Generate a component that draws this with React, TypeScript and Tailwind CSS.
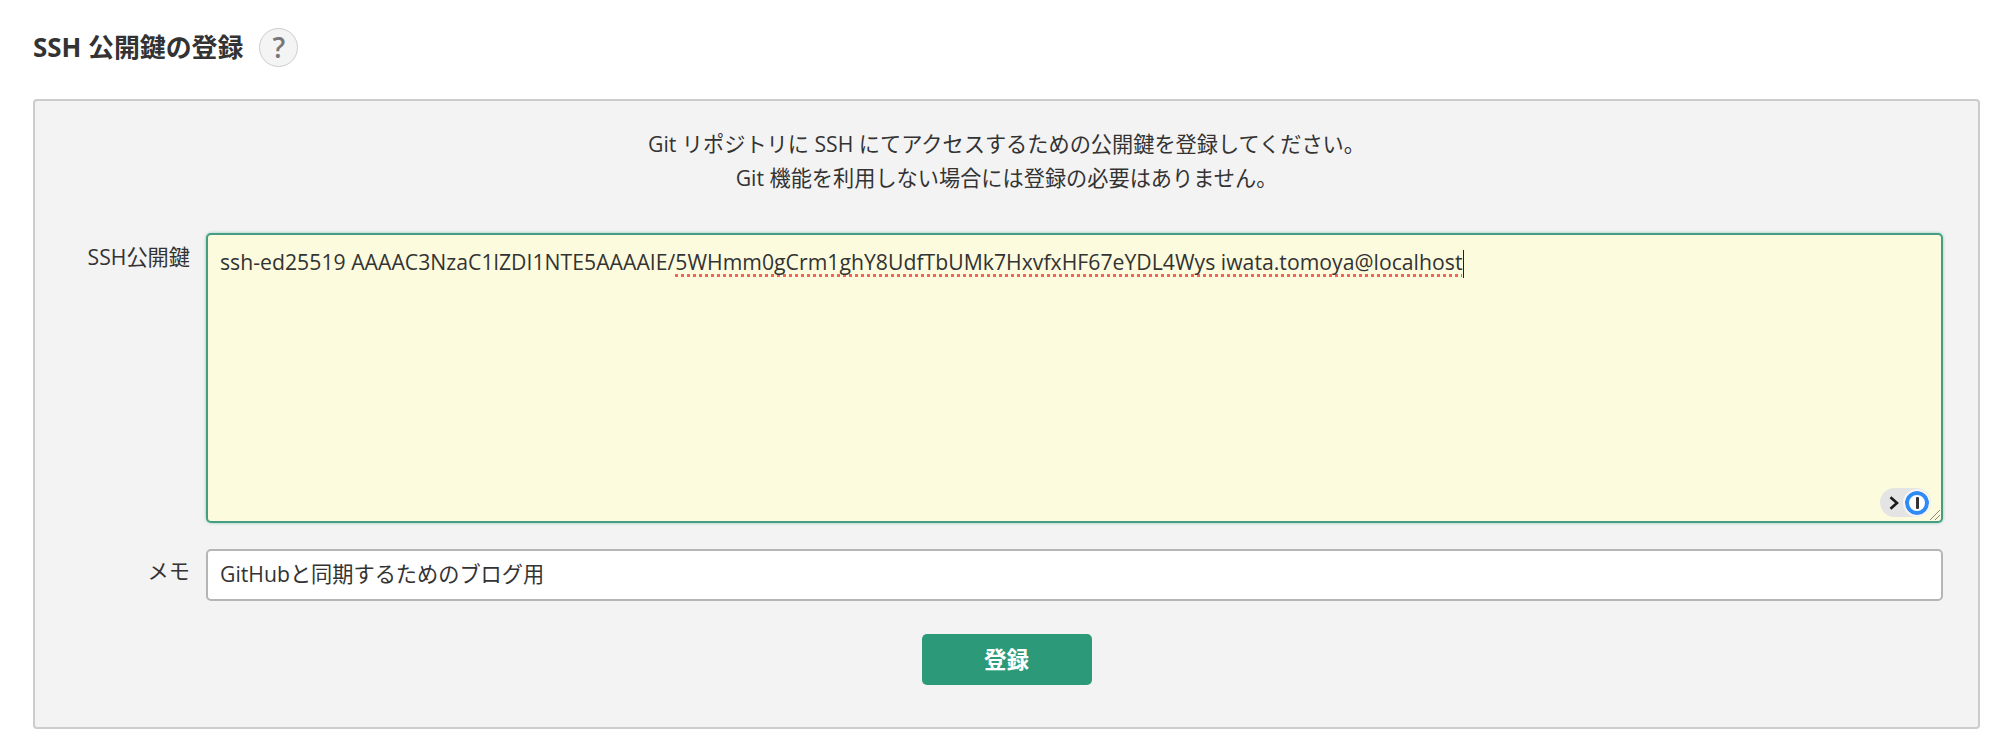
export default function App() {
  return (
    <div className="min-h-[739px] bg-white pl-[33px] pr-5 pt-[27px] text-[#333] [font-family:'Open_Sans','Noto_Sans_CJK_JP',sans-serif]">
      <div className="flex h-[40px] items-center">
        <h2 className="text-[25.9px] font-bold leading-[40px] text-[#333]">SSH 公開鍵の登録</h2>
        <span className="ml-[16px] flex h-[39px] w-[39px] items-center justify-center rounded-full border border-[#ccc] bg-[#f4f4f4] text-[28px] font-semibold leading-none text-[#777]">?</span>
      </div>
      <div className="mt-[32px] h-[630px] rounded-[4px] border-2 border-[#ccc] bg-[#f3f3f3] pt-[26px]">
        <p className="text-center text-[21.2px] leading-[34px]">
          Git リポジトリに SSH にてアクセスするための公開鍵を登録してください。
          <br />
          Git 機能を利用しない場合には登録の必要はありません。
        </p>
        <div className="mt-[38px] flex pr-[35px]">
          <label className="w-[171px] shrink-0 pr-[16px] pt-[8px] text-right text-[21.2px] leading-[32px]">SSH公開鍵</label>
          <div className="relative h-[290px] flex-1 rounded-[5px] border-2 border-[#459e84] bg-[#fcfbdd] shadow-[0_0_3px_rgba(42,155,120,0.5)]">
            <div className="whitespace-nowrap pl-[12px] pt-[11px] text-[21.2px] leading-[32px] tracking-[0.02px]">
              <span>ssh-ed25519 AAAAC3NzaC1lZDI1NTE5AAAAIE/</span>
              <span className="underline decoration-[#f0645a] decoration-dotted decoration-[3px] underline-offset-[4px] [text-decoration-skip-ink:none]">5WHmm0gCrm1ghY8UdfTbUMk7HxvfxHF67eYDL4Wys iwata.tomoya@localhost</span>
              <span className="ml-px inline-block h-[28px] w-px bg-[#222] align-middle" />
            </div>
            <div className="absolute bottom-[4px] right-[10px] flex h-[29px] w-[51px] items-center rounded-full bg-[#e4e4e4]">
              <svg viewBox="0 0 10 14" className="ml-[9px] h-[14px] w-[10px]">
                <path d="M1.5 1.2L8 7l-6.5 5.8" fill="none" stroke="#1a1a1a" strokeWidth="2.6" />
              </svg>
              <span className="ml-[6px] flex h-[24px] w-[24px] items-center justify-center rounded-full border-[4px] border-[#2f8cf5] bg-white outline-2 outline-[#f4f4f4]">
                <span className="h-[12px] w-[3px] rounded-[1px] bg-[#333]" />
              </span>
            </div>
            <svg viewBox="0 0 12 12" className="absolute bottom-0 right-0 h-[12px] w-[12px]">
              <path d="M1 11L11 1M6 11l5-5" stroke="#888" strokeWidth="1" fill="none" />
            </svg>
          </div>
        </div>
        <div className="mt-[26px] flex pr-[35px]">
          <label className="w-[171px] shrink-0 pr-[16px] pt-[6px] text-right text-[21.2px] leading-[32px]">メモ</label>
          <div className="flex h-[52px] flex-1 items-center rounded-[5px] border-2 border-[#b5b5b5] bg-white pb-[3px] pl-[12px] text-[21.2px]">GitHubと同期するためのブログ用</div>
        </div>
        <div className="mt-[33px] flex justify-center">
          <button className="h-[51px] w-[170px] rounded-[5px] bg-[#2c9a78] text-[22.5px] font-bold text-white">登録</button>
        </div>
      </div>
    </div>
  );
}
